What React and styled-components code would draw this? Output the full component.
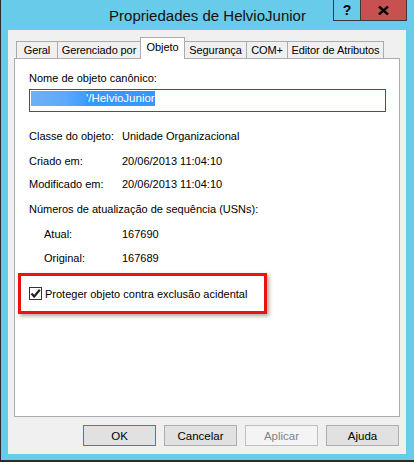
import styled, { createGlobalStyle } from 'styled-components';

const Global = createGlobalStyle`
    body{
        margin: 0;
        font-family: "Liberation Sans", Arial, sans-serif;
        font-size: 11px;
        color: #000;
    }
`;

const tabs = [
    { label: 'Geral', width: 42 },
    { label: 'Gerenciado por', width: 84 },
    { label: 'Objeto', width: 45, active: true },
    { label: 'Segurança', width: 63 },
    { label: 'COM+', width: 42 },
    { label: 'Editor de Atributos', width: 97 },
];

const fields = [
    { label: 'Classe do objeto:', value: 'Unidade Organizacional', top: 16 },
    { label: 'Criado em:', value: '20/06/2013 11:04:10', top: 9 },
    { label: 'Modificado em:', value: '20/06/2013 11:04:10', top: 7 },
];

const usns = [
    { label: 'Atual:', value: '167690', top: 9 },
    { label: 'Original:', value: '167689', top: 8 },
];

function App(){
    return(
        <Window>
            <Global />
            <TitleBar>
                <span />
                <Title>Propriedades de HelvioJunior</Title>
                <Caption>
                    <CaptionButton width={28}>?</CaptionButton>
                    <CaptionButton width={46} close>
                        <svg width="11" height="9" viewBox="0 0 11 9">
                            <path d="M1 0.5 L10 8.5 M10 0.5 L1 8.5" stroke="#000" strokeWidth="2.4" />
                        </svg>
                    </CaptionButton>
                </Caption>
            </TitleBar>
            <Client>
                <TabStrip>
                    {tabs.map(t => (
                        <Tab key={t.label} width={t.width} active={t.active}>{t.label}</Tab>
                    ))}
                </TabStrip>
                <Panel>
                    <Label>Nome de objeto canônico:</Label>
                    <NameBox>
                        <Selection>
                            <Redacted />
                            <span>'/HelvioJunior</span>
                        </Selection>
                    </NameBox>
                    {fields.map(f => (
                        <Row key={f.label} top={f.top}>
                            <span>{f.label}</span>
                            <span>{f.value}</span>
                        </Row>
                    ))}
                    <Row top={9}>
                        <span>Números de atualização de sequência (USNs):</span>
                    </Row>
                    {usns.map(f => (
                        <Row key={f.label} top={f.top} indent>
                            <span>{f.label}</span>
                            <span>{f.value}</span>
                        </Row>
                    ))}
                    <Highlight>
                        <Check>
                            <svg width="11" height="11" viewBox="0 0 11 11">
                                <path d="M1.5 5.5 L4.2 8.5 L9.8 1.8" fill="none" stroke="#222" strokeWidth="2.2" />
                            </svg>
                        </Check>
                        <span>Proteger objeto contra exclusão acidental</span>
                    </Highlight>
                </Panel>
                <ButtonRow>
                    <Button primary>OK</Button>
                    <Button>Cancelar</Button>
                    <Button disabled>Aplicar</Button>
                    <Button>Ajuda</Button>
                </ButtonRow>
            </Client>
        </Window>
    );
}

const Window = styled.div`
    box-sizing: border-box;
    width: 414px;
    height: 462px;
    background: #67cbe9;
    border-left: 1px solid #2b2b2b;
    border-bottom: 2px solid #2b2b2b;
    display: flex;
    flex-direction: column;
`;

const TitleBar = styled.div`
    height: 30px;
    display: grid;
    grid-template-columns: 1fr auto 1fr;
`;

const Title = styled.div`
    font-size: 15px;
    line-height: 31px;
    color: #111;
    white-space: nowrap;
`;

const Caption = styled.div`
    justify-self: end;
    align-self: start;
    display: flex;
    margin-right: 7px;
`;

const CaptionButton = styled.div`
    box-sizing: border-box;
    width: ${p => p.width}px;
    height: 21px;
    border: 1px solid #3a3a3a;
    border-top: none;
    border-left: ${p => p.close ? 'none' : '1px solid #3a3a3a'};
    background: ${p => p.close ? '#c75050' : 'transparent'};
    display: flex;
    align-items: center;
    justify-content: center;
    font-weight: bold;
    font-size: 14px;
`;

const Client = styled.div`
    box-sizing: border-box;
    margin: 0 8px 0 7px;
    height: 424px;
    background: #f0f0f0;
    padding: 7px 6px 0 6px;
    display: flex;
    flex-direction: column;
`;

const TabStrip = styled.div`
    display: flex;
    align-items: flex-end;
    height: 21px;
    padding-left: 2px;
`;

const Tab = styled.div`
    box-sizing: border-box;
    width: ${p => p.width}px;
    height: ${p => p.active ? 22 : 17}px;
    margin-bottom: ${p => p.active ? -1 : 0}px;
    position: relative;
    z-index: ${p => p.active ? 1 : 0};
    background: ${p => p.active ? '#fff' : '#f0f0f0'};
    border: 1px solid #acacac;
    border-bottom: none;
    margin-left: -1px;
    padding-top: ${p => p.active ? 2 : 1}px;
    font-size: 11px;
    letter-spacing: -0.1px;
    text-align: center;
    line-height: 14px;
    white-space: nowrap;
    &:first-child{
        margin-left: 0;
    }
`;

const Panel = styled.div`
    box-sizing: border-box;
    height: 359px;
    background: #fff;
    border: 1px solid #acacac;
    padding: 11px 13px 0 14px;
`;

const Label = styled.div`
    line-height: 16px;
`;

const NameBox = styled.div`
    box-sizing: border-box;
    margin-top: 3px;
    height: 23px;
    border: 1px solid #2d5a83;
    padding: 1px 0 0 1px;
`;

const Selection = styled.div`
    display: inline-flex;
    height: 15px;
    line-height: 15px;
    font-size: 11.5px;
    background: #3399ff;
    color: #fff;
`;

const Redacted = styled.span`
    width: 55px;
    background: linear-gradient(90deg, #6fb0f5, #5ea9fb 60%, #3f9cff);
`;

const Row = styled.div`
    display: grid;
    grid-template-columns: ${p => p.indent ? '15px 78px' : '93px'} auto;
    line-height: 16px;
    margin-top: ${p => p.top}px;
    white-space: nowrap;
    ${p => p.indent ? '&::before{ content: ""; }' : ''}
`;

const Highlight = styled.div`
    box-sizing: border-box;
    width: 249px;
    height: 41px;
    margin: 7px 0 0 -11px;
    border: 3px solid #ee1111;
    box-shadow: 2px 2px 4px rgba(0, 0, 0, 0.35);
    padding-left: 8px;
    display: flex;
    align-items: center;
    gap: 3px;
    white-space: nowrap;
`;

const Check = styled.div`
    box-sizing: border-box;
    width: 13px;
    height: 13px;
    border: 1px solid #333;
    background: #fff;
    display: flex;
    align-items: center;
    justify-content: center;
`;

const ButtonRow = styled.div`
    display: flex;
    justify-content: flex-end;
    gap: 8px;
    margin-top: 8px;
    padding-right: 1px;
`;

const Button = styled.div`
    box-sizing: border-box;
    width: 73px;
    height: 21px;
    display: flex;
    align-items: center;
    justify-content: center;
    font-size: 11.5px;
    border: 1px solid ${p => p.primary ? '#3c7fb1' : p.disabled ? '#bfbfbf' : '#adadad'};
    background: ${p => p.disabled ? '#f4f4f4' : '#e1e1e1'};
    color: ${p => p.disabled ? '#838383' : '#000'};
`;

export default App;
